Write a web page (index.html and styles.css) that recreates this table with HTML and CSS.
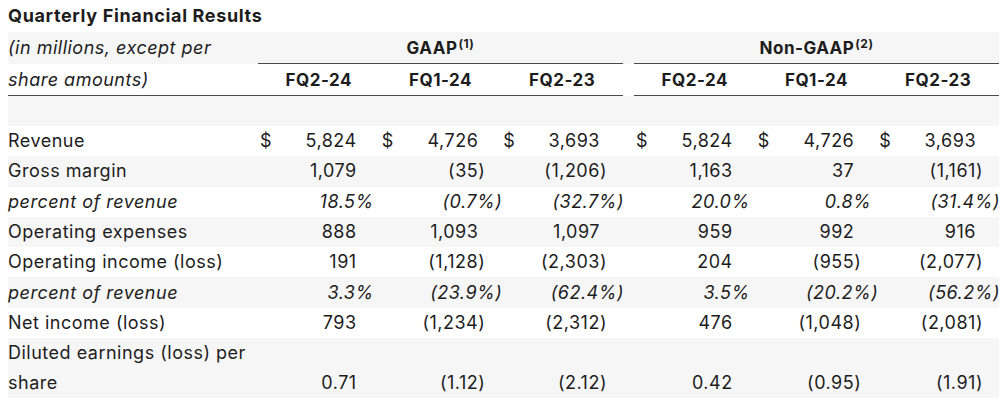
FILE: index.html
```html
<!DOCTYPE html>
<html>
<head>
<meta charset="utf-8">
<link rel="stylesheet" href="styles.css">
</head>
<body>
<div class="page">
  <h1 class="title">Quarterly Financial Results</h1>
  <table class="fin">
    <colgroup>
      <col class="c-label">
      <col class="c-num"><col class="c-num"><col class="c-num">
      <col class="c-gap">
      <col class="c-num"><col class="c-num"><col class="c-num">
    </colgroup>
    <thead>
      <tr class="alt">
        <th class="lab it">(in millions, except per</th>
        <th class="grp" colspan="3">GAAP<sup>(1)</sup></th>
        <th class="gap"></th>
        <th class="grp" colspan="3">Non-GAAP<sup>(2)</sup></th>
      </tr>
      <tr>
        <th class="lab it ruled">share amounts)</th>
        <th class="per ruled">FQ2-24</th>
        <th class="per ruled">FQ1-24</th>
        <th class="per ruled">FQ2-23</th>
        <th class="gap"></th>
        <th class="per ruled">FQ2-24</th>
        <th class="per ruled">FQ1-24</th>
        <th class="per ruled">FQ2-23</th>
      </tr>
    </thead>
    <tbody>
      <tr class="alt spacer"><td colspan="8"></td></tr>
      <tr>
        <td class="lab">Revenue</td>
        <td class="num"><div class="cur"><span>$</span><span>5,824</span></div></td>
        <td class="num"><div class="cur"><span>$</span><span>4,726</span></div></td>
        <td class="num"><div class="cur"><span>$</span><span>3,693</span></div></td>
        <td class="gap"></td>
        <td class="num"><div class="cur"><span>$</span><span>5,824</span></div></td>
        <td class="num"><div class="cur"><span>$</span><span>4,726</span></div></td>
        <td class="num"><div class="cur"><span>$</span><span>3,693</span></div></td>
      </tr>
      <tr class="alt">
        <td class="lab">Gross margin</td>
        <td class="num">1,079</td>
        <td class="num">(35<span class="cp">)</span></td>
        <td class="num">(1,206<span class="cp">)</span></td>
        <td class="gap"></td>
        <td class="num">1,163</td>
        <td class="num">37</td>
        <td class="num">(1,161<span class="cp">)</span></td>
      </tr>
      <tr>
        <td class="lab it">percent of revenue</td>
        <td class="pct">18.5%</td>
        <td class="pct">(0.7%<span class="cp">)</span></td>
        <td class="pct">(32.7%<span class="cp">)</span></td>
        <td class="gap"></td>
        <td class="pct">20.0%</td>
        <td class="pct">0.8%</td>
        <td class="pct">(31.4%<span class="cp">)</span></td>
      </tr>
      <tr class="alt">
        <td class="lab">Operating expenses</td>
        <td class="num">888</td>
        <td class="num">1,093</td>
        <td class="num">1,097</td>
        <td class="gap"></td>
        <td class="num">959</td>
        <td class="num">992</td>
        <td class="num">916</td>
      </tr>
      <tr>
        <td class="lab">Operating income (loss)</td>
        <td class="num">191</td>
        <td class="num">(1,128<span class="cp">)</span></td>
        <td class="num">(2,303<span class="cp">)</span></td>
        <td class="gap"></td>
        <td class="num">204</td>
        <td class="num">(955<span class="cp">)</span></td>
        <td class="num">(2,077<span class="cp">)</span></td>
      </tr>
      <tr class="alt">
        <td class="lab it">percent of revenue</td>
        <td class="pct">3.3%</td>
        <td class="pct">(23.9%<span class="cp">)</span></td>
        <td class="pct">(62.4%<span class="cp">)</span></td>
        <td class="gap"></td>
        <td class="pct">3.5%</td>
        <td class="pct">(20.2%<span class="cp">)</span></td>
        <td class="pct">(56.2%<span class="cp">)</span></td>
      </tr>
      <tr>
        <td class="lab">Net income (loss)</td>
        <td class="num">793</td>
        <td class="num">(1,234<span class="cp">)</span></td>
        <td class="num">(2,312<span class="cp">)</span></td>
        <td class="gap"></td>
        <td class="num">476</td>
        <td class="num">(1,048<span class="cp">)</span></td>
        <td class="num">(2,081<span class="cp">)</span></td>
      </tr>
      <tr class="alt bottom">
        <td class="lab">Diluted earnings (loss) per share</td>
        <td class="num">0.71</td>
        <td class="num">(1.12<span class="cp">)</span></td>
        <td class="num">(2.12<span class="cp">)</span></td>
        <td class="gap"></td>
        <td class="num">0.42</td>
        <td class="num">(0.95<span class="cp">)</span></td>
        <td class="num">(1.91<span class="cp">)</span></td>
      </tr>
    </tbody>
  </table>
</div>
</body>
</html>
```

FILE: styles.css
```css
html, body {
  margin: 0;
  padding: 0;
  background: #ffffff;
}

.page {
  padding-left: 8px;
  font-family: "Inter", "Liberation Sans", sans-serif;
  color: #1d1d1d;
  font-size: 18px;
  letter-spacing: 0.5px;
}

.title {
  margin: 0;
  height: 32px;
  line-height: 32px;
  font-size: 18px;
  font-weight: 700;
  letter-spacing: 0.65px;
}

.fin {
  width: 991px;
  border-collapse: separate;
  border-spacing: 0;
  table-layout: fixed;
}

.c-label { width: 250px; }
.c-gap { width: 11px; }

.fin th,
.fin td {
  padding: 0;
  height: 30px;
  line-height: 30px;
  white-space: nowrap;
}

.fin tr.alt th,
.fin tr.alt td {
  background: #f6f6f6;
}

.fin thead tr:first-child th {
  height: 31px;
}

.fin thead tr:nth-child(2) th {
  height: 31px;
}

.fin th {
  font-weight: 700;
}

.fin .lab {
  text-align: left;
  font-weight: 400;
}

.it {
  font-style: italic;
}

.grp {
  text-align: center;
  border-bottom: 1px solid #4a4a4a;
  font-size: 17px;
}

.grp sup {
  font-size: 12px;
  line-height: 0;
  vertical-align: 6px;
  margin-left: 1px;
}

.per {
  text-align: center;
  font-size: 17px;
}

.ruled {
  border-bottom: 1px solid #4a4a4a;
}

.fin .spacer td {
  height: 30px;
}

.fin tbody tr:not(.spacer) td {
  height: 30.3px;
}

.num {
  text-align: right;
  padding-right: 23px !important;
}

.pct {
  text-align: right;
  font-style: italic;
  padding-right: 6px !important;
}

.cp {
  margin-right: -7px;
}

.cur {
  display: flex;
  justify-content: space-between;
  padding-left: 2px;
}

.fin .bottom .lab {
  white-space: normal;
  line-height: 30px;
}

.fin .bottom td {
  vertical-align: bottom;
}
```
